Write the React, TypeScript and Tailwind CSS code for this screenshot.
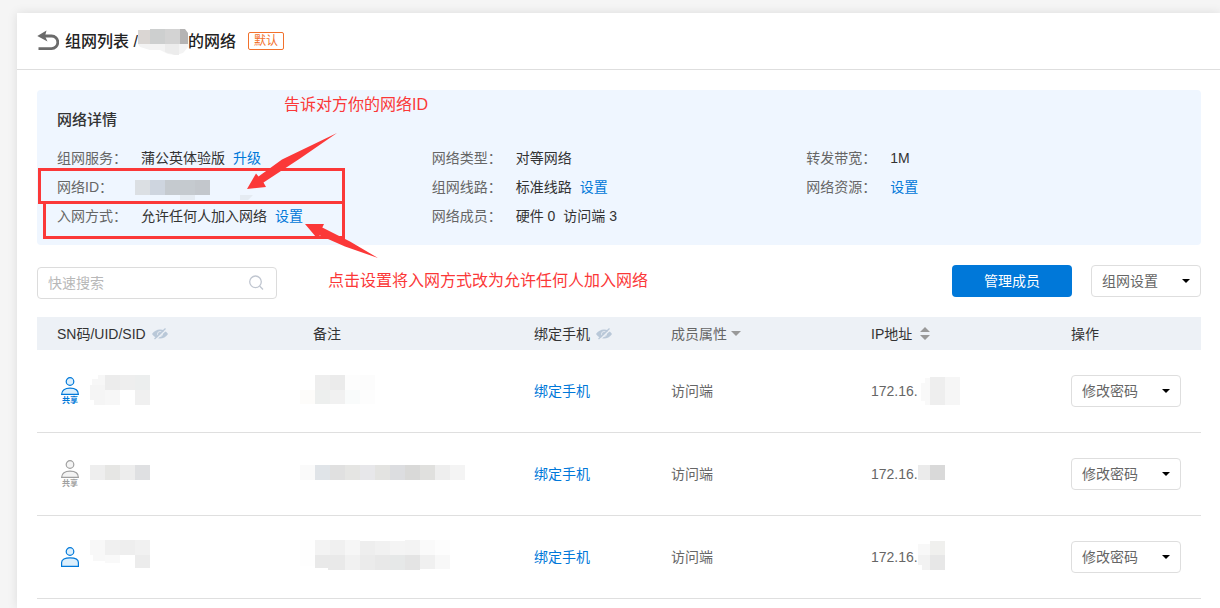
import type { ReactNode } from "react";

type Block = [x: number, y: number, w: number, h: number, fill: string];

const MEMBERS = [
  {
    id: "m1",
    icon: "shared-on",
    sn: [
      [2, 8, 13, 11, "#f7f7f7"], [8, 4, 7, 4, "#f7f7f7"], [15, 4, 15, 15, "#ececec"], [30, 4, 15, 15, "#eeeeee"], [45, 4, 15, 15, "#eceeee"],
      [0, 14, 15, 15, "#f5f5f5"], [4, 29, 11, 5, "#f5f5f5"], [15, 19, 15, 15, "#f7f7f7"], [45, 19, 15, 15, "#f0f0f0"],
    ] as Block[],
    remark: [
      [0, 19, 15, 14, "#fdfcfa"], [15, 4, 15, 15, "#eeeeee"], [30, 4, 15, 15, "#ebebeb"], [45, 4, 15, 15, "#fdfdfd"], [60, 4, 15, 15, "#fcfcfc"],
      [15, 19, 15, 14, "#edefee"], [30, 19, 15, 14, "#f1f1f1"], [45, 19, 15, 14, "#f9fbfb"], [60, 19, 15, 14, "#fdfdfd"],
    ] as Block[],
    ip: [[3, 12, 9, 18, "#f9f9f9"], [7, 7, 5, 27, "#f9f9f9"], [12, 6, 15, 28, "#eeeeee"], [27, 6, 15, 28, "#f6f6f6"]] as Block[],
  },
  {
    id: "m2",
    icon: "shared-off",
    sn: [[0, 11, 15, 15, "#eeeeee"], [15, 11, 15, 15, "#e6e6e4"], [30, 11, 15, 15, "#ededed"], [45, 11, 15, 15, "#dfe0e2"]] as Block[],
    remark: [
      [0, 11, 15, 15, "#fafafa"], [15, 11, 15, 15, "#e0e4e8"], [30, 11, 15, 15, "#e0e0e0"], [45, 11, 15, 15, "#e5e5e3"],
      [60, 11, 15, 15, "#e7e7ea"], [75, 11, 15, 15, "#e3e3e1"], [90, 11, 15, 15, "#dcdde0"], [105, 11, 15, 15, "#d9d9d8"],
      [120, 11, 15, 15, "#e0e0de"], [135, 11, 15, 15, "#eeeeee"], [150, 11, 15, 15, "#f4f4f4"],
    ] as Block[],
    ip: [[0, 11, 12, 15, "#ebebeb"], [12, 11, 15, 15, "#d9d9d9"]] as Block[],
  },
  {
    id: "m3",
    icon: "single",
    sn: [
      [0, 3, 15, 15, "#f8f8f8"], [15, 3, 15, 15, "#f0f0f0"], [30, 3, 15, 15, "#eeeeee"], [45, 3, 15, 15, "#f1f1f1"],
      [3, 18, 12, 6, "#f8f8f8"], [15, 18, 15, 8, "#f9f9f9"], [45, 18, 15, 13, "#ececec"],
    ] as Block[],
    remark: [
      [0, 3, 15, 26, "#fefefe"],
      [15, 3, 15, 15, "#f3f3f3"], [30, 3, 15, 15, "#f0f0f0"], [45, 3, 15, 15, "#f6f6f6"], [60, 4, 15, 14, "#eeeeee"], [75, 4, 15, 14, "#f1f1f1"],
      [90, 4, 15, 14, "#f4f4f4"], [105, 3, 15, 15, "#f3f3f3"], [120, 3, 15, 15, "#fafafa"], [135, 3, 15, 15, "#fdfdfd"],
      [15, 18, 15, 13, "#e9e9e9"], [28, 18, 17, 15, "#e9e9e9"], [45, 18, 15, 15, "#f1f1f1"], [60, 18, 15, 15, "#ebebeb"], [75, 18, 15, 15, "#e8e8e8"],
      [90, 18, 15, 15, "#e6e8e8"], [105, 18, 15, 15, "#e4e4e4"], [120, 18, 15, 14, "#f0f0f0"], [135, 18, 15, 14, "#f8f8f8"],
    ] as Block[],
    ip: [[0, 7, 12, 11, "#f8f8f8"], [0, 18, 12, 10, "#f2f2f2"], [4, 28, 8, 5, "#f2f2f2"], [12, 4, 15, 14, "#f0f0ee"], [12, 18, 15, 15, "#e7e7e7"]] as Block[],
  },
];

export default function App() {
  return (
    <div className="relative flex min-h-screen flex-col overflow-hidden bg-[#f5f5f5] pt-[13px] pl-[17px] font-['Liberation_Sans','Noto_Sans_CJK_SC',sans-serif] text-sm text-[#333]">
      <main className="flex-1 bg-white shadow-[0_0_10px_rgba(0,0,0,0.1)]">

        {/* ── Title bar ── */}
        <header className="flex h-[57px] items-center border-b border-[#dedede] px-5">
          <a href="#list" aria-label="返回" className="mr-1.5">
            <BackIcon />
          </a>
          <h1 className="flex items-center pt-0.5 text-base font-medium text-[#222]">
            <a href="#list">组网列表 /</a>
            <svg className="h-[26px] w-[50px]" viewBox="0 0 50 26" aria-hidden="true">
              <path d="M0 15h50v3l-5 6-7 2-8-1-8-4H12L2 18z" fill="#f3f3f3" />
              <path d="M27 15h14v11h-4l-10-3z" fill="#ececec" />
              <path d="M0 1h12v14H0z" fill="#dad6d3" />
              <path d="M12 0h15v15H12z" fill="#cdcfcf" />
              <path d="M27 0h15v15H27z" fill="#d3d3d3" />
              <path d="M42 0h5l3 4v11h-8z" fill="#b5b4b4" />
            </svg>
            的网络
          </h1>
          <span className="ml-3 h-[18px] rounded-xs border border-[#f2712c] px-[5px] text-xs leading-4 text-[#f2712c]">默认</span>
        </header>

        <div className="pt-5 pr-[19px] pl-5">
          {/* ── Network details ── */}
          <section className="rounded bg-[#eff6ff] px-5 pt-5 pb-3.5">
            <h2 className="text-[15px] leading-5 font-medium">网络详情</h2>
            <dl className="mt-3.5 grid grid-cols-3 leading-[29px]">
              <Detail label="组网服务">蒲公英体验版 <SetLink>升级</SetLink></Detail>
              <Detail label="网络类型">对等网络</Detail>
              <Detail label="转发带宽">1M</Detail>
              <Detail label="网络ID">
                <svg className="-ml-1.5 h-[29px] w-[120px]" viewBox="0 0 120 29" aria-hidden="true">
                  <path d="M0 7h15v15H0z" fill="#dbdfe3" />
                  <path d="M15 7h15v15H15z" fill="#ced5df" />
                  <path d="M30 7h30v15H30z" fill="#c5cacf" />
                  <path d="M60 7h15v15H60z" fill="#c3c7cc" />
                  <path d="M45 22h15v5H45zM105 22h13l-5 5h-8z" fill="#e5ebf2" />
                </svg>
              </Detail>
              <Detail label="组网线路">标准线路 <SetLink>设置</SetLink></Detail>
              <Detail label="网络资源"><SetLink>设置</SetLink></Detail>
              <Detail label="入网方式">允许任何人加入网络 <SetLink>设置</SetLink></Detail>
              <Detail label="网络成员"><span>硬件 0</span><span>访问端 3</span></Detail>
            </dl>
          </section>

          {/* ── Toolbar ── */}
          <div className="mt-5 flex items-start">
            <div className="relative mt-0.5 w-60">
              <input
                type="search"
                aria-label="快速搜索"
                placeholder="快速搜索"
                className="h-8 w-full rounded border border-[#dcdcdc] bg-white pr-9 pl-2.5 text-sm outline-none placeholder:text-[#b8b8b8]"
              />
              <svg className="absolute top-2 right-[13px] size-4" viewBox="0 0 16 16" fill="none" stroke="#c0c6d0" strokeWidth="1.3" aria-hidden="true">
                <circle cx="7.500" cy="6.800" r="5.800" />
                <path d="M11.600 11 15 14.500" />
              </svg>
            </div>
            <button type="button" className="ml-auto h-8 w-[120px] rounded bg-[#0078d9] text-white">管理成员</button>
            <div className="ml-[19px]">
              <Dropdown label="组网设置" />
            </div>
          </div>

          {/* ── Members ── */}
          <table className="mt-[18px] w-full table-fixed border-separate border-spacing-0 text-left">
            <colgroup>
              <col className="w-[256px]" />
              <col className="w-[221px]" />
              <col className="w-[137px]" />
              <col className="w-[200px]" />
              <col className="w-[200px]" />
              <col className="w-[150px]" />
            </colgroup>
            <thead>
              <tr className="h-[33px] bg-[#edf1f6]">
                <Th>SN码/UID/SID <EyeOffIcon /></Th>
                <Th>备注</Th>
                <Th>绑定手机 <EyeOffIcon /></Th>
                <Th>
                  <span className="flex items-center gap-1 text-[#666]">
                    成员属性
                    <svg className="h-[5px] w-2.5" viewBox="0 0 10 5" fill="#999" aria-hidden="true"><path d="M0 0h10L5 5z" /></svg>
                  </span>
                </Th>
                <Th>
                  <span className="flex items-center gap-2">
                    IP地址
                    <svg className="h-[13px] w-2.5" viewBox="0 0 10 13" fill="#999" aria-hidden="true"><path d="M0 5h10L5 0zM0 8h10l-5 5z" /></svg>
                  </span>
                </Th>
                <Th>操作</Th>
              </tr>
            </thead>
            <tbody>
              {MEMBERS.map((m) => (
                <tr key={m.id} className="h-[83px] text-[#666] *:border-b *:border-[#dfdfdf]">
                  <td className="p-0 pl-5">
                    <div className="flex items-center gap-[7px]">
                      <MemberIcon kind={m.icon} />
                      <Mosaic blocks={m.sn} />
                    </div>
                  </td>
                  <td className="p-0 pl-[7px]"><Mosaic blocks={m.remark} /></td>
                  <td className="p-0 pl-5"><SetLink>绑定手机</SetLink></td>
                  <td className="p-0 pl-5">访问端</td>
                  <td className="p-0 pl-5">
                    <div className="flex items-center">172.16.<Mosaic blocks={m.ip} /></div>
                  </td>
                  <td className="p-0 pl-5"><Dropdown label="修改密码" /></td>
                </tr>
              ))}
            </tbody>
          </table>
        </div>
      </main>

      {/* ── Red callouts over the page ── */}
      <div className="pointer-events-none absolute inset-0 text-base leading-6 text-[#fb3838]">
        <div className="absolute top-[168px] left-[38px] h-9 w-[307px] border-3 border-[#fb3838]" />
        <div className="absolute top-[201px] left-[43px] h-[38px] w-[302px] border-3 border-[#fb3838]" />
        <svg className="absolute top-0 left-0 h-[300px] w-[400px]" viewBox="0 0 400 300" fill="#fb3838" aria-hidden="true">
          <path d="M247 189 256 173.500 258.500 176.500 282 159.500 337 133 300 158.500 263.500 182.500 266 187z" />
          <path d="M305 224H324L322.300 227.500 350 241.500 378 258 345 246.500 320 235.500 316 237z" />
        </svg>
        <p className="absolute top-[93px] left-[284px] whitespace-nowrap">告诉对方你的网络ID</p>
        <p className="absolute top-[269px] left-[328px] whitespace-nowrap">点击设置将入网方式改为允许任何人加入网络</p>
      </div>
    </div>
  );
}

function Detail({ label, children }: { label: string; children: ReactNode }) {
  return (
    <div className="flex">
      <dt className="w-[84px] shrink-0 text-[#666]">{label}：</dt>
      <dd className="flex gap-2 whitespace-nowrap">{children}</dd>
    </div>
  );
}

function SetLink({ children }: { children: ReactNode }) {
  return <a href="#set" className="text-[#0078d9]">{children}</a>;
}

function Th({ children }: { children: ReactNode }) {
  return <th className="p-0 pl-5 font-normal whitespace-nowrap">{children}</th>;
}

function Dropdown({ label }: { label: string }) {
  return (
    <div className="relative w-[110px]">
      <select aria-label={label} className="block h-8 w-full appearance-none rounded border border-[#dedede] bg-white pl-2.5 text-sm text-[#666]">
        <option>{label}</option>
      </select>
      <svg className="pointer-events-none absolute top-3.5 right-[11px] h-1 w-2" viewBox="0 0 8 4" fill="#000" aria-hidden="true">
        <path d="M0 0h8L4 4z" />
      </svg>
    </div>
  );
}

// blocks are laid on a 40px high strip, wide enough for the furthest one
function Mosaic({ blocks }: { blocks: Block[] }) {
  const width = Math.max(...blocks.map(([x, , w]) => x + w));
  return (
    <svg className="block h-10 shrink-0" width={width} viewBox={`0 0 ${width} 40`} shapeRendering="crispEdges" aria-hidden="true">
      {blocks.map(([x, y, w, h, fill], i) => (
        <rect key={i} x={x} y={y} width={w} height={h} fill={fill} />
      ))}
    </svg>
  );
}

function MemberIcon({ kind }: { kind: string }) {
  const off = kind === "shared-off";
  const single = kind === "single";
  return (
    <span className={`flex w-[26px] flex-col items-center ${off ? "text-[#a0a0a0]" : "text-[#0078d9]"}`}>
      <svg className="h-5 w-[18px]" viewBox="0 0 18 20" fill={off ? "#f4f4f4" : "#dceffc"} stroke="currentColor" strokeWidth="1.2" aria-hidden="true">
        <circle cx="9" cy="4.500" r="3.800" />
        {single
          ? <path d="M.6 19.400V15.500C.6 12.500 4 10.800 9 10.800s8.400 1.700 8.400 4.700v3.900z" />
          : <path d="M.6 17.400C.6 13.200 4 11.200 9 11.200s8.400 2 8.400 6.200z" />}
      </svg>
      {!single && <span className="text-[8px] leading-2 font-bold">共享</span>}
    </span>
  );
}

function EyeOffIcon() {
  return (
    <svg className="ml-0.5 inline-block h-3 w-4 align-[-1px]" viewBox="0 0 16 12" aria-hidden="true">
      <path d="M0 6c2-3 5-4.500 8-4.500S14 3 16 6c-2 3-5 4.500-8 4.500S2 9 0 6z" fill="#b9c8d8" />
      <circle cx="8" cy="6" r="2.500" fill="none" stroke="#edf1f6" strokeWidth=".8" />
      <path d="M4 11.500 14.500 1.500" stroke="#edf1f6" strokeWidth="1.400" />
      <path d="M2.500 11 13.500 .5" stroke="#b9c8d8" strokeWidth="1.300" />
    </svg>
  );
}

function BackIcon() {
  return (
    <svg className="h-[22px] w-[22px]" viewBox="0 0 22 22" aria-hidden="true">
      <path d="M5 6h9.500a6.300 6.300 0 0 1 0 12.600H1.500" fill="none" stroke="#6b6b6b" strokeWidth="2.800" />
      <path d="M.3 6 9.500 .5 8 6l2.500 5.500z" fill="#6b6b6b" />
    </svg>
  );
}
